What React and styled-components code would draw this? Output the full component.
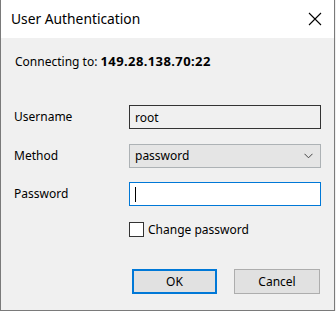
import React from "react";
import styled, { createGlobalStyle } from "styled-components";

const Global = createGlobalStyle`
  html, body { margin: 0; padding: 0; background: #f0f0f0; }
  body { font-family: "Noto Sans", "Open Sans", sans-serif; }
`;

const Window = styled.div`
  width: 335px;
  height: 311px;
  box-sizing: border-box;
  border: 1px solid #7a7a7a;
  border-top: none;
  background: #f0f0f0;
  display: flex;
  flex-direction: column;
  color: #000;
`;

const TitleBar = styled.div`
  height: 38px;
  background: #fff;
  display: flex;
  align-items: center;
  justify-content: space-between;
  padding: 0 12px 0 10px;
  flex-shrink: 0;
`;

const Title = styled.div`
  font-size: 13.8px;
  font-family: "Noto Sans", sans-serif;
  padding-bottom: 1px;
`;

const Close = styled.svg`
  width: 14px;
  height: 14px;
`;

const Content = styled.div`
  padding: 15px 13px 0 13px;
  display: flex;
  flex-direction: column;
  font-size: 12px;
`;

const Connecting = styled.div`
  line-height: 16px;
  height: 16px;
  padding-left: 1px;
  margin-bottom: 36px;
  white-space: nowrap;
`;

const Bold = styled.b`
  font-weight: 700;
  font-size: 13px;
  letter-spacing: 0.4px;
`;

const Form = styled.div`
  display: grid;
  grid-template-columns: 115px 192px;
  row-gap: 14.5px;
  align-items: center;
`;

const Label = styled.div`
  line-height: 16px;
`;

const Field = styled.div`
  height: 24px;
  box-sizing: border-box;
  border: 1px solid ${(p) => p.$border};
  background: ${(p) => p.$bg};
  display: flex;
  align-items: center;
  justify-content: space-between;
  padding: 0 7px 0 5px;
  font-size: 12px;
`;

const Caret = styled.div`
  width: 1px;
  height: 15px;
  background: #000;
`;

const Chevron = styled.svg`
  width: 9px;
  height: 6px;
`;

const CheckRow = styled.label`
  grid-column: 2;
  display: flex;
  align-items: center;
  gap: 4px;
  margin-top: 1.5px;
  line-height: 15px;
`;

const Box = styled.span`
  width: 15px;
  height: 15px;
  box-sizing: border-box;
  border: 1px solid #333;
  background: #fff;
  display: inline-block;
`;

const Buttons = styled.div`
  display: flex;
  justify-content: flex-end;
  gap: 17px;
  margin-top: 32px;
  padding-right: 1px;
`;

const Button = styled.button`
  width: ${(p) => (p.$primary ? "85px" : "86px")};
  height: 25px;
  box-sizing: border-box;
  background: #e1e1e1;
  border: ${(p) => (p.$primary ? "2px solid #0078d7" : "1px solid #adadad")};
  font-family: "Noto Sans", sans-serif;
  font-size: 12px;
  color: #000;
  padding: 0;
`;

export default function App() {
  return (
    <>
      <Global />
      <Window>
        <TitleBar>
          <Title>User Authentication</Title>
          <Close viewBox="0 0 14 14">
            <path d="M1 1L13 13M13 1L1 13" stroke="#000" strokeWidth="1.1" fill="none" />
          </Close>
        </TitleBar>
        <Content>
          <Connecting>
            Connecting to: <Bold>149.28.138.70:22</Bold>
          </Connecting>
          <Form>
            <Label>Username</Label>
            <Field $border="#333" $bg="#f0f0f0">root</Field>
            <Label>Method</Label>
            <Field $border="#adb2b5" $bg="#e5e5e5">
              password
              <Chevron viewBox="0 0 9 6">
                <path d="M0.5 0.8L4.5 4.8L8.5 0.8" stroke="#444" strokeWidth="1" fill="none" />
              </Chevron>
            </Field>
            <Label>Password</Label>
            <Field $border="#0078d7" $bg="#fff">
              <Caret />
            </Field>
            <CheckRow>
              <Box />
              Change password
            </CheckRow>
          </Form>
          <Buttons>
            <Button $primary>OK</Button>
            <Button>Cancel</Button>
          </Buttons>
        </Content>
      </Window>
    </>
  );
}
